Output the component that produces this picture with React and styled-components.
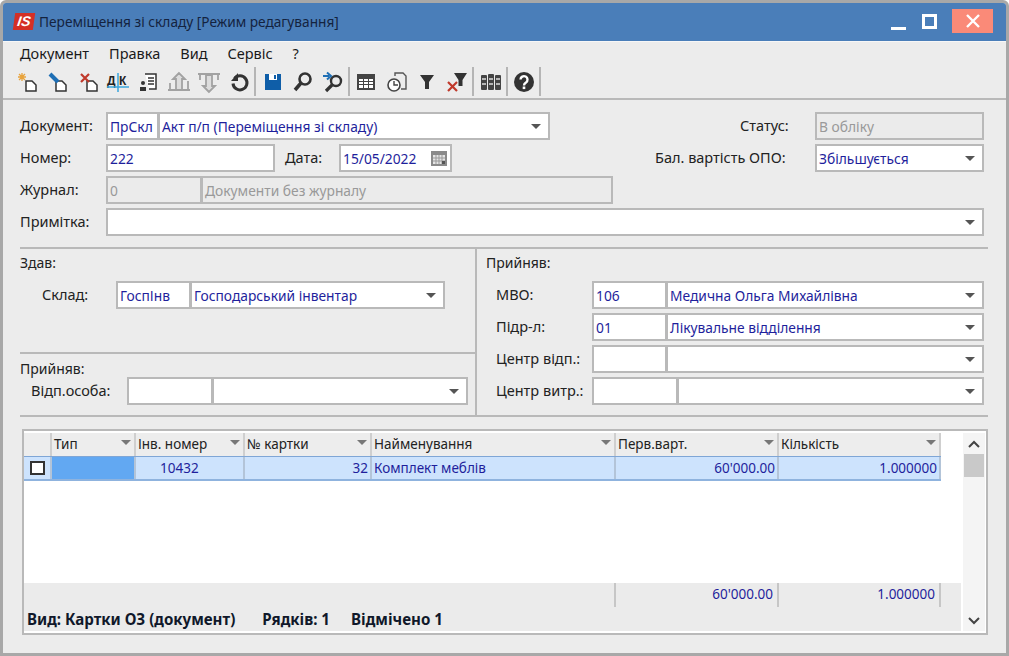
import React from "react";
import styled, { createGlobalStyle } from "styled-components";

const GlobalStyle = createGlobalStyle`
  html, body { margin: 0; padding: 0; background: #fff; }
  body { font-family: "Noto Sans", "Liberation Sans", sans-serif; font-size: 14.5px; color: #222; }
  * { box-sizing: border-box; }
`;

const gridColumns = "28px 84px 109px 127px 244px 163px 162px";

const Window = styled.div`
  width: 1009px;
  height: 656px;
  background: #ececec;
  border: 3px solid #a8a8a8;
  border-radius: 6px 6px 0 0;
  display: flex;
  flex-direction: column;
  overflow: hidden;
`;

const TitleBar = styled.div`
  height: 38px;
  flex-shrink: 0;
  background: #4a7eb9;
  display: flex;
  align-items: center;
  padding: 0 13px 2px 11px;
  color: #14233f;
  font-size: 13.7px;
`;

const Logo = styled.div`
  width: 20px;
  height: 17px;
  margin-right: 5px;
  background: #d42f25;
  color: #fff;
  font: italic bold 14px/17px "Liberation Sans", sans-serif;
  text-align: center;
  transform: skewX(-8deg);
`;

const WindowTitle = styled.span`
  flex: 1;
`;

const WinButtons = styled.div`
  display: flex;
  align-items: center;
`;

const MinButton = styled.div`
  width: 15px;
  height: 3px;
  margin: 15px 16px 0 0;
  background: #fff;
`;

const MaxButton = styled.div`
  width: 15px;
  height: 15px;
  margin-right: 15px;
  border: 3px solid #fff;
`;

const CloseButton = styled.div`
  width: 41px;
  height: 24px;
  background: #fa8a78;
  display: flex;
  align-items: center;
  justify-content: center;
`;

const MenuBar = styled.div`
  height: 26px;
  flex-shrink: 0;
  display: flex;
  align-items: center;
  padding: 0 0 3px 17px;
  gap: 20px;
  border-top: 1px solid #f7f7f7;
  color: #1a1a1a;
`;

const Toolbar = styled.div`
  height: 33px;
  flex-shrink: 0;
  display: flex;
  align-items: center;
  padding: 0 0 2px 9px;
  border-bottom: 2px solid #b9b9b9;
`;

const ToolButton = styled.div`
  width: 30.3px;
  height: 30px;
  display: flex;
  align-items: center;
  justify-content: center;
`;

const ToolSep = styled.div`
  width: 2px;
  height: 29px;
  margin-right: 1px;
  background: #b5b5b5;
`;

const Form = styled.div`
  padding: 12px 22px 0 17px;
  display: flex;
  flex-direction: column;
  gap: 4px;
  height: 147px;
  flex-shrink: 0;
`;

const Row = styled.div`
  display: flex;
  align-items: center;
  height: 28px;
`;

const Label = styled.label`
  width: ${(p) => p.$width}px;
  flex-shrink: 0;
  padding-left: ${(p) => p.$indent || 0}px;
  margin-bottom: 2px;
  color: #222;
  white-space: nowrap;
`;

const Field = styled.div`
  width: ${(p) => (p.$width ? `${p.$width}px` : "auto")};
  flex: ${(p) => (p.$width ? "none" : 1)};
  height: 28px;
  position: relative;
  display: flex;
  align-items: center;
  padding: 0 2px;
  border: 2px solid #b9b9b9;
  margin-right: ${(p) => (p.$joined ? "-1px" : 0)};
  background: ${(p) => (p.$disabled ? "#ebebeb" : "#fff")};
  color: ${(p) => (p.$disabled ? "#999" : "#1f1f9c")};
  font-size: 13.8px;
  white-space: nowrap;
  overflow: hidden;
`;

const Arrow = styled.span`
  position: absolute;
  right: 7px;
  top: 10px;
  border-left: 5px solid transparent;
  border-right: 5px solid transparent;
  border-top: 5px solid #555;
`;

const HeadArrow = styled(Arrow)`
  right: 3px;
  top: 7px;
  border-top-color: #777;
`;

const RightPart = styled.div`
  margin-left: auto;
  display: flex;
  align-items: center;
`;

const Split = styled.div`
  margin: 0 18px 0 17px;
  height: 170px;
  flex-shrink: 0;
  display: grid;
  grid-template-columns: 457px 1fr;
  border-top: 2px solid #b9b9b9;
  border-bottom: 2px solid #b9b9b9;
`;

const LeftColumn = styled.div`
  display: flex;
  flex-direction: column;
  border-right: 2px solid #b9b9b9;
`;

const Section = styled.div`
  height: ${(p) => p.$height}px;
  padding-top: ${(p) => p.$top}px;
  flex-shrink: 0;
  border-bottom: ${(p) => (p.$divided ? "2px solid #b9b9b9" : "none")};
`;

const RightColumn = styled.div`
  padding: 4px 4px 0 9px;
  display: flex;
  flex-direction: column;
  gap: 4px;
`;

const SectionTitle = styled.div`
  height: ${(p) => p.$height}px;
  font-size: 14px;
  color: #222;
`;

const IndentRow = styled(Row)`
  padding-left: ${(p) => p.$indent}px;
`;

const TablePanel = styled.div`
  margin: 12px 18px 0 19px;
  height: 206px;
  flex-shrink: 0;
  display: flex;
  background: #fff;
  border: 2px solid #b9b9b9;
  padding: 2px 1px 2px 0;
`;

const TableMain = styled.div`
  flex: 1;
  display: flex;
  flex-direction: column;
`;

const TableHead = styled.div`
  display: grid;
  grid-template-columns: ${gridColumns};
  height: 23px;
  width: 917px;
`;

const HeadCell = styled.div`
  position: relative;
  background: #ededed;
  border-right: 2px solid #cfcfcf;
  padding-left: 2px;
  line-height: 22px;
  font-size: 13.5px;
  color: #222;
  white-space: nowrap;
`;

const TableRow = styled.div`
  display: grid;
  grid-template-columns: ${gridColumns};
  height: 25px;
  width: 917px;
  background: #cde3fd;
  border-top: 1px solid #7fa6d6;
  border-bottom: 2px solid #8fb3de;
`;

const Cell = styled.div`
  display: flex;
  align-items: center;
  justify-content: ${(p) => (p.$right ? "flex-end" : "flex-start")};
  padding-right: 2px;
  padding-left: ${(p) => p.$indent || 2}px;
  border-right: 2px solid #b3c4d8;
  background: ${(p) => (p.$active ? "#62a8f2" : "transparent")};
  color: #1f1f9c;
  font-size: 13.5px;
`;

const CheckBox = styled.div`
  width: 15px;
  height: 14px;
  margin-left: 4px;
  border: 2px solid #333;
  background: #fff;
`;

const Blank = styled.div`
  flex: 1;
`;

const Footer = styled.div`
  height: 48px;
  background: #ebebeb;
  display: flex;
  flex-direction: column;
`;

const Totals = styled.div`
  display: grid;
  grid-template-columns: 592px 163px 162px;
  height: 24px;
  width: 917px;
`;

const TotalCell = styled.div`
  text-align: right;
  padding-right: 4px;
  line-height: 23px;
  border-right: 2px solid #c6c6c6;
  color: #1f1f9c;
  font-size: 13.5px;
`;

const StatusLine = styled.div`
  display: flex;
  padding: 2px 0 0 3px;
  font-weight: 700;
  font-size: 15.1px;
  line-height: 20px;
  color: #10182a;
`;

const StatusText = styled.span`
  margin-right: ${(p) => p.$space}px;
`;

const ScrollBar = styled.div`
  width: 22px;
  margin-left: 2px;
  background: #f4f4f4;
  display: flex;
  flex-direction: column;
  align-items: center;
  padding-top: 7px;
`;

const Thumb = styled.div`
  width: 20px;
  height: 23px;
  margin-top: 6px;
  background: #c9c9c9;
`;

const Icon = ({ children, w = 24 }) => (
  <svg width={w} height="24" viewBox="0 0 24 24" fill="none">
    {children}
  </svg>
);

const Doc = () => <path d="M11 11h6l4 4v6H11z" stroke="#333" strokeWidth="1.5" fill="#fff" />;

const CalendarIcon = () => (
  <svg width="18" height="18" viewBox="0 0 18 18">
    <rect x="1" y="2" width="16" height="15" fill="#8a8a8a" />
    <rect x="3" y="6" width="12" height="9" fill="#e4e4e4" />
    <path d="M3 9h12M3 12h12M6 6v9M9 6v9M12 6v9" stroke="#999" strokeWidth="1" />
    <rect x="12" y="12" width="3" height="3" fill="#555" />
  </svg>
);

const tools = [
  <Icon key="new"><Doc /><path d="M7 3v8M3 7h8M4 4l6 6M10 4l-6 6" stroke="#e8a33c" strokeWidth="1.3" /></Icon>,
  <Icon key="edit"><Doc /><path d="M5 4l8 8" stroke="#1f6fb5" strokeWidth="4" /></Icon>,
  <Icon key="del"><Doc /><path d="M5 4l8 8M13 4l-8 8" stroke="#c0392b" strokeWidth="2.2" /></Icon>,
  <Icon key="dk">
    <text x="1" y="15" fontFamily="Liberation Sans" fontWeight="700" fontSize="12" fill="#222">Д</text>
    <text x="13" y="15" fontFamily="Liberation Sans" fontWeight="700" fontSize="12" fill="#222">К</text>
    <path d="M12 3v19M1 17h22" stroke="#3aa6dd" strokeWidth="1.5" />
  </Icon>,
  <Icon key="report">
    <path d="M9 4h11v15H13" stroke="#333" strokeWidth="1.5" fill="#fff" />
    <path d="M12 8h6M12 11h6M12 14h6" stroke="#333" strokeWidth="1.3" />
    <rect x="4" y="17" width="6" height="4" fill="#333" /><circle cx="7" cy="13" r="2" fill="#333" />
  </Icon>,
  <Icon key="up">
    <path d="M12 3l-6 6h3v11h6V9h3zM3 13v6M21 11v8M1 20h22" stroke="#a2a2a2" strokeWidth="1.8" fill="#ddd" />
  </Icon>,
  <Icon key="down">
    <path d="M12 22l-6-6h3V5h6v11h3zM3 4v6M21 4v6M1 4h22" stroke="#a2a2a2" strokeWidth="1.8" fill="#ddd" />
  </Icon>,
  <Icon key="undo">
    <path d="M7.5 8.5a7 7 0 1 1-1.5 5" stroke="#333" strokeWidth="3" />
    <path d="M11 3v8H4z" fill="#333" />
  </Icon>,
  "sep",
  <Icon key="save">
    <path d="M4 4h16v16H4z" fill="#0f5ea8" />
    <rect x="8" y="4" width="8" height="6" fill="#fff" />
    <rect x="13" y="5" width="2" height="4" fill="#0f5ea8" />
  </Icon>,
  <Icon key="find">
    <circle cx="14" cy="9" r="5.5" stroke="#333" strokeWidth="2.6" />
    <path d="M10 13l-6 7" stroke="#333" strokeWidth="3.5" />
  </Icon>,
  <Icon key="findnext">
    <circle cx="15" cy="11" r="5" stroke="#333" strokeWidth="2.4" />
    <path d="M11 15l-6 6" stroke="#333" strokeWidth="3.2" />
    <path d="M2 6h6M6 2.5L10 6 6 9.5" stroke="#1f6fb5" strokeWidth="2" />
  </Icon>,
  "sep",
  <Icon key="table">
    <rect x="3" y="4" width="18" height="16" fill="#444" />
    <path d="M5 9h4v2H5zM10 9h4v2h-4zM15 9h4v2h-4zM5 12h4v2H5zM10 12h4v2h-4zM15 12h4v2h-4zM5 15h4v3H5zM10 15h4v3h-4zM15 15h4v3h-4z" fill="#fff" />
  </Icon>,
  <Icon key="clock">
    <path d="M10 6V3h8l3 3v13h-5" stroke="#555" strokeWidth="1.4" />
    <circle cx="9" cy="15" r="6" stroke="#444" strokeWidth="1.6" fill="#fff" />
    <path d="M9 11v4h4" stroke="#444" strokeWidth="1.4" />
  </Icon>,
  <Icon key="filter"><path d="M5 5h14l-5 7v7h-4v-7z" fill="#333" /></Icon>,
  <Icon key="nofilter">
    <path d="M9 3h13l-4.5 7v6h-4v-6z" fill="#333" />
    <path d="M3 12l9 9M12 12l-9 9" stroke="#c0392b" strokeWidth="2.2" />
  </Icon>,
  "sep",
  <Icon key="books">
    <rect x="2" y="5" width="6" height="15" rx="1" fill="#444" />
    <rect x="9" y="4" width="6" height="16" rx="1" fill="#444" />
    <rect x="16" y="5" width="6" height="15" rx="1" fill="#444" />
    <path d="M3 9h4M3 14h4M10 9h4M10 14h4M17 9h4M17 14h4" stroke="#ddd" strokeWidth="1.6" />
  </Icon>,
  "sep",
  <Icon key="help">
    <circle cx="12" cy="12" r="10" fill="#333" />
    <path d="M8.5 9.5a3.5 3.5 0 1 1 5.5 3c-1.4.9-2 1.4-2 3" stroke="#fff" strokeWidth="2.4" />
    <rect x="10.7" y="16.5" width="2.6" height="2.6" fill="#fff" />
  </Icon>,
  "sep",
];

const Combo = ({ width, disabled, children }) => (
  <Field $width={width} $disabled={disabled}>
    {children}
    <Arrow />
  </Field>
);

const SortCell = ({ children }) => (
  <HeadCell>
    {children}
    {children && <HeadArrow />}
  </HeadCell>
);

export default function App() {
  return (
    <>
      <GlobalStyle />
      <Window>
        <TitleBar>
          <Logo>IS</Logo>
          <WindowTitle>Переміщення зі складу [Режим редагування]</WindowTitle>
          <WinButtons>
            <MinButton />
            <MaxButton />
            <CloseButton>
              <svg width="16" height="16" viewBox="0 0 16 16">
                <path d="M2 2l12 12M14 2L2 14" stroke="#fff" strokeWidth="2.4" />
              </svg>
            </CloseButton>
          </WinButtons>
        </TitleBar>
        <MenuBar>
          <span>Документ</span>
          <span>Правка</span>
          <span>Вид</span>
          <span>Сервіс</span>
          <span>?</span>
        </MenuBar>
        <Toolbar>
          {tools.map((tool, i) =>
            tool === "sep" ? <ToolSep key={i} /> : <ToolButton key={i}>{tool}</ToolButton>
          )}
        </Toolbar>
        <Form>
          <Row>
            <Label $width={86}>Документ:</Label>
            <Field $width={53} $joined>ПрСкл</Field>
            <Combo width={392}>Акт п/п (Переміщення зі складу)</Combo>
            <RightPart>
              <Label $width={75}>Статус:</Label>
              <Field $width={169} $disabled>В обліку</Field>
            </RightPart>
          </Row>
          <Row>
            <Label $width={86}>Номер:</Label>
            <Field $width={169}>222</Field>
            <Label $width={64} $indent={10}>Дата:</Label>
            <Field $width={113}>
              15/05/2022
              <RightPart><CalendarIcon /></RightPart>
            </Field>
            <RightPart>
              <Label $width={160}>Бал. вартість ОПО:</Label>
              <Combo width={169}>Збільшується</Combo>
            </RightPart>
          </Row>
          <Row>
            <Label $width={86}>Журнал:</Label>
            <Field $width={96} $joined $disabled>0</Field>
            <Field $width={412} $disabled>Документи без журналу</Field>
          </Row>
          <Row>
            <Label $width={86}>Примітка:</Label>
            <Combo width={878} />
          </Row>
        </Form>
        <Split>
          <LeftColumn>
            <Section $height={105} $top={4} $divided>
              <SectionTitle $height={28}>Здав:</SectionTitle>
              <IndentRow $indent={22}>
                <Label $width={74}>Склад:</Label>
                <Field $width={75} $joined>ГоспІнв</Field>
                <Combo width={255}>Господарський інвентар</Combo>
              </IndentRow>
            </Section>
            <Section $height={61} $top={5}>
              <SectionTitle $height={18}>Прийняв:</SectionTitle>
              <IndentRow $indent={11}>
                <Label $width={96}>Відп.особа:</Label>
                <Field $width={86} $joined />
                <Combo width={256} />
              </IndentRow>
            </Section>
          </LeftColumn>
          <RightColumn>
            <SectionTitle $height={24}>Прийняв:</SectionTitle>
            <IndentRow $indent={10}>
              <Label $width={96}>МВО:</Label>
              <Field $width={75} $joined>106</Field>
              <Combo width={318}>Медична Ольга Михайлівна</Combo>
            </IndentRow>
            <IndentRow $indent={10}>
              <Label $width={96}>Підр-л:</Label>
              <Field $width={75} $joined>01</Field>
              <Combo width={318}>Лікувальне відділення</Combo>
            </IndentRow>
            <IndentRow $indent={10}>
              <Label $width={96}>Центр відп.:</Label>
              <Field $width={75} $joined />
              <Combo width={318} />
            </IndentRow>
            <IndentRow $indent={10}>
              <Label $width={96}>Центр витр.:</Label>
              <Field $width={86} $joined />
              <Combo width={307} />
            </IndentRow>
          </RightColumn>
        </Split>
        <TablePanel>
          <TableMain>
            <TableHead>
              <SortCell />
              <SortCell>Тип</SortCell>
              <SortCell>Інв. номер</SortCell>
              <SortCell>№ картки</SortCell>
              <SortCell>Найменування</SortCell>
              <SortCell>Перв.варт.</SortCell>
              <SortCell>Кількість</SortCell>
            </TableHead>
            <TableRow>
              <Cell><CheckBox /></Cell>
              <Cell $active />
              <Cell $indent={24}>10432</Cell>
              <Cell $right>32</Cell>
              <Cell>Комплект меблів</Cell>
              <Cell $right>60'000.00</Cell>
              <Cell $right>1.000000</Cell>
            </TableRow>
            <Blank />
            <Footer>
              <Totals>
                <TotalCell />
                <TotalCell>60'000.00</TotalCell>
                <TotalCell>1.000000</TotalCell>
              </Totals>
              <StatusLine>
                <StatusText $space={27}>Вид: Картки ОЗ (документ)</StatusText>
                <StatusText $space={21}>Рядків: 1</StatusText>
                <StatusText>Відмічено 1</StatusText>
              </StatusLine>
            </Footer>
          </TableMain>
          <ScrollBar>
            <svg width="12" height="8" viewBox="0 0 12 8">
              <path d="M1 7l5-5 5 5" stroke="#444" strokeWidth="2" fill="none" />
            </svg>
            <Thumb />
            <Blank />
            <svg width="12" height="8" viewBox="0 0 12 8" style={{ marginBottom: 6 }}>
              <path d="M1 1l5 5 5-5" stroke="#444" strokeWidth="2" fill="none" />
            </svg>
          </ScrollBar>
        </TablePanel>
      </Window>
    </>
  );
}
